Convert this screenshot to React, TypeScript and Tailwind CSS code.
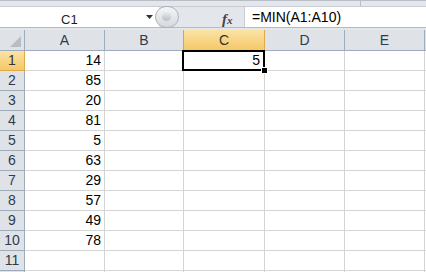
import React from "react";

const cols = ["A", "B", "C", "D", "E"];
const widths = [80, 79, 81, 80, 80];
const dataA = [14, 85, 20, 81, 5, 63, 29, 57, 49, 78];

export default function App() {
  const font = { fontFamily: '"Liberation Sans", Arial, sans-serif' };
  return (
    <div className="w-[426px] h-[272px] overflow-hidden bg-white" style={font}>
      {/* ribbon bottom strip */}
      <div className="h-[6px] bg-[#e3e7ec] border-t border-[#b9bec6] flex">
        <div className="w-[361px] border-r border-[#b9bec6]" />
      </div>
      {/* formula bar */}
      <div className="h-[22px] flex bg-[#e3e7ec] border-b border-[#b6bbc3]">
        <div className="w-[159px] bg-white border-t border-[#c9cdd3] relative flex items-center">
          <span className="absolute left-[61px] top-[3px] text-[13px] text-[#1e1e1e]">C1</span>
          <svg className="absolute left-[146px] top-[8px]" width="8" height="5" viewBox="0 0 8 5">
            <path d="M0 0 H7 L3.5 4 Z" fill="#333" />
          </svg>
        </div>
        <div className="w-[85px] relative border-t border-[#c9cdd3]">
          <div className="absolute left-[-4px] top-[-1px] w-[24px] h-[22px] rounded-full bg-gradient-to-b from-[#f4f5f7] to-[#d5d9de] border border-[#aeb3ba]">
            <div className="absolute left-[6px] top-[5px] w-[9px] h-[9px] rounded-full bg-gradient-to-b from-[#e9ebee] to-[#b9bec5]" />
          </div>
          <span
            className="absolute left-[63px] top-[1px] text-[15px] italic font-bold text-[#444]"
            style={{ fontFamily: '"Liberation Serif", serif' }}
          >
            f<span className="text-[11px]">x</span>
          </span>
        </div>
        <div className="flex-1 bg-white border-l border-t border-[#c9cdd3] flex items-center pl-[7px] text-[14px] text-black">
          =MIN(A1:A10)
        </div>
      </div>
      <div className="h-[2px] bg-[#e3e7ec]" />
      {/* header row */}
      <div className="flex h-[21px]">
        <div className="w-[25px] bg-[#dfe3e8] border-r border-b border-[#9eabbb] relative">
          <svg className="absolute right-[3px] bottom-[3px]" width="11" height="11" viewBox="0 0 11 11">
            <path d="M11 0 V11 H0 Z" fill="#b7bdc6" />
          </svg>
        </div>
        {cols.map((c, i) => (
          <div
            key={c}
            style={{ width: widths[i] }}
            className={
              c === "C"
                ? "shrink-0 flex items-center justify-center text-[14px] text-[#333] bg-gradient-to-b from-[#fbe3a6] to-[#f4c865] border-r border-b border-[#e0a94a]"
                : "shrink-0 flex items-center justify-center text-[14px] text-[#2f3b4c] bg-[#dfe3e8] border-r border-b border-[#9eabbb]"
            }
          >
            {c}
          </div>
        ))}
        <div className="flex-1 bg-[#dfe3e8] border-b border-[#9eabbb]" />
      </div>
      {/* rows */}
      {Array.from({ length: 12 }).map((_, r) => (
        <div key={r} className="flex h-[20px]">
          <div
            className={
              r === 0
                ? "w-[25px] shrink-0 flex items-center justify-center text-[14px] text-[#333] bg-gradient-to-b from-[#fbe3a6] to-[#f4c865] border-r border-b border-[#e0a94a]"
                : "w-[25px] shrink-0 flex items-center justify-center text-[14px] text-[#2f3b4c] bg-[#dfe3e8] border-r border-b border-[#9eabbb]"
            }
          >
            {r < 11 ? r + 1 : ""}
          </div>
          {cols.map((c, i) => (
            <div
              key={c}
              style={{ width: widths[i] }}
              className={
                "shrink-0 border-r border-b border-[#d4d4d4] flex items-center justify-end pr-[3px] text-[14px] text-black relative" +
                (c === "C" && r === 0 ? " z-10" : "")
              }
            >
              {c === "A" && r < 10 ? dataA[r] : ""}
              {c === "C" && r === 0 ? (
                <>
                  <span className="relative right-[1px]">5</span>
                  <div className="absolute left-[-2px] top-[-1px] right-[-1px] bottom-[-1px] border-2 border-black pointer-events-none" />
                  <div className="absolute right-[-4px] bottom-[-4px] w-[7px] h-[7px] bg-black border border-white" />
                </>
              ) : null}
            </div>
          ))}
          <div className="flex-1 border-b border-[#d4d4d4]" />
        </div>
      ))}
    </div>
  );
}
